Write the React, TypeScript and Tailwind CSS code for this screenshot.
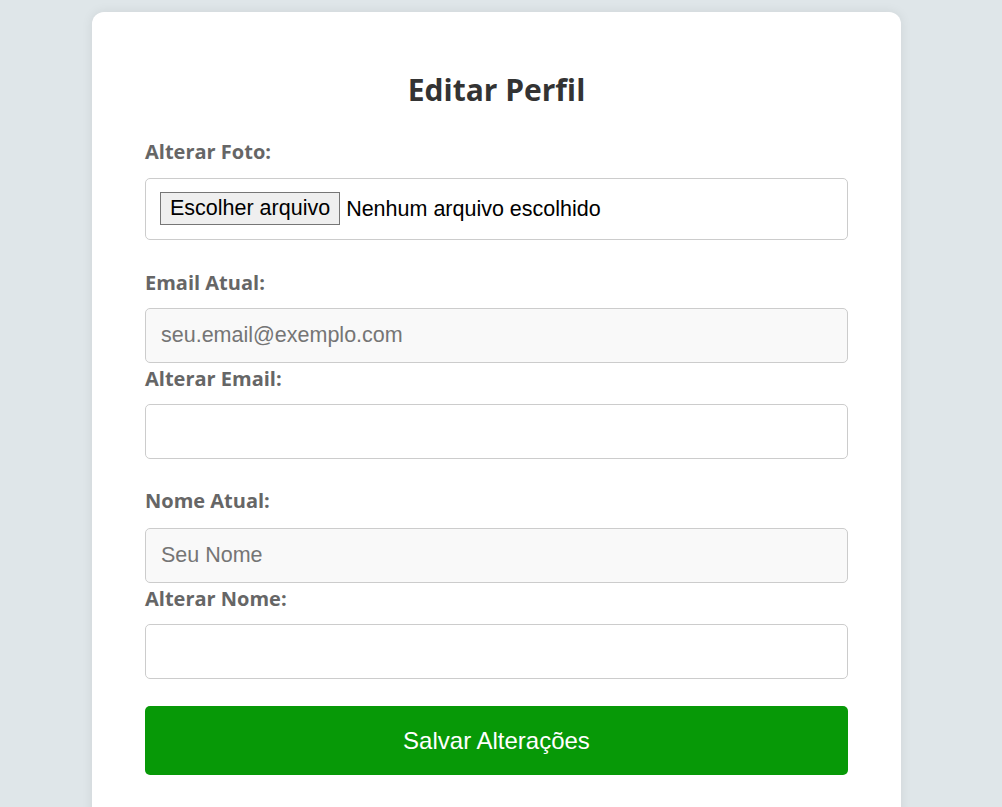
export default function App() {
  const label = 'block text-[20px] leading-[24px] font-bold text-[#666]';
  const input = 'block w-full h-[55px] rounded-[5px] border border-[#ccc] px-[15px] text-[21.5px] outline-none';
  const arial = { fontFamily: '"Liberation Sans", Arial, sans-serif' };
  return (
    <div className="min-h-[807px] overflow-hidden bg-[#dfe6e9] pl-[92px] pt-[12px]" style={{ fontFamily: '"Open Sans", Lato, sans-serif' }}>
      <div className="w-[809px] min-h-[820px] rounded-[12px] bg-white px-[53px] pt-[60px] shadow-[0_0_12px_rgba(0,0,0,0.08)]">
        <h1 className="text-center text-[30px] leading-[36px] font-bold text-[#333]">Editar Perfil</h1>

        <label className={`${label} mt-[32px]`}>Alterar Foto:</label>
        <div className="mt-[14px] flex h-[62px] items-center rounded-[5px] border border-[#ccc] px-[14px] text-[21.5px] text-black" style={arial}>
          <span className="flex h-[33px] items-center border border-[#767676] bg-[#efefef] px-[9px] -translate-y-px">Escolher arquivo</span>
          <span className="ml-[6px]">Nenhum arquivo escolhido</span>
        </div>

        <label className={`${label} mt-[31px]`}>Email Atual:</label>
        <input className={`${input} mt-[13px] bg-[#f9f9f9] placeholder:text-[#757575]`} placeholder="seu.email@exemplo.com" readOnly style={arial} />
        <label className={`${label} mt-[4px]`}>Alterar Email:</label>
        <input className={`${input} mt-[13px] bg-white`} style={arial} />

        <label className={`${label} mt-[30px]`}>Nome Atual:</label>
        <input className={`${input} mt-[15px] bg-[#f9f9f9] placeholder:text-[#757575]`} placeholder="Seu Nome" readOnly style={arial} />
        <label className={`${label} mt-[4px]`}>Alterar Nome:</label>
        <input className={`${input} mt-[13px] bg-white`} style={arial} />

        <button className="mt-[27px] block h-[69px] w-full rounded-[5px] bg-[#079907] text-[24px] text-white" style={arial}>
          Salvar Alterações
        </button>
      </div>
    </div>
  );
}
